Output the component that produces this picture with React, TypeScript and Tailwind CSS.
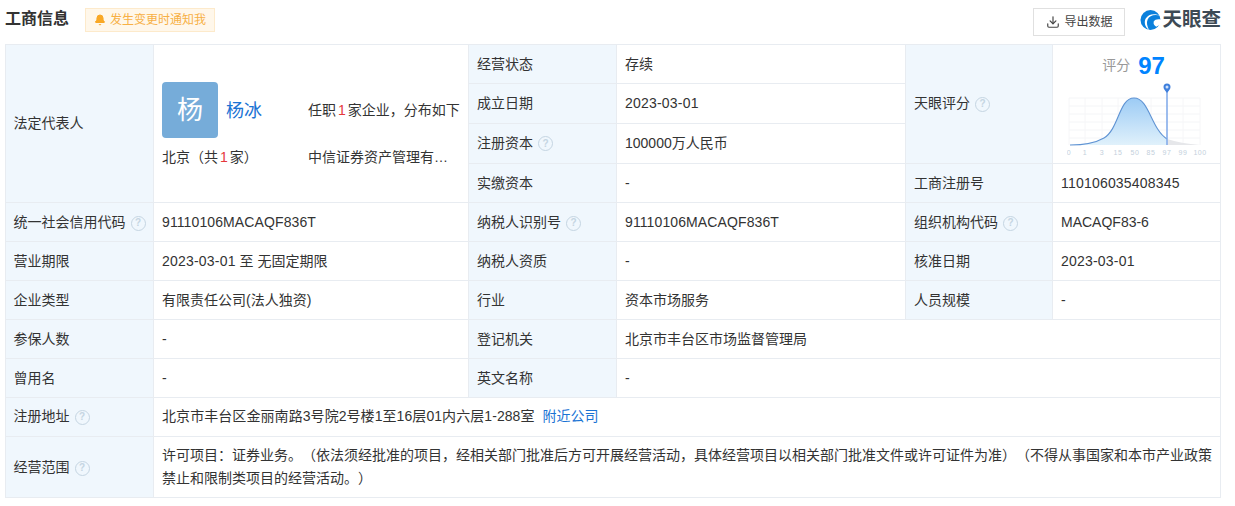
import { Bell, Download } from 'lucide-react';

const labelCls = 'border border-[#e8ecf1] bg-[#f0f7fd] pl-2 pr-1 align-middle';
const firstLabelCls = 'border border-[#e8ecf1] bg-[#f0f7fd] pl-[7.5px] pr-1 align-middle';
const valueCls = 'border border-[#e8ecf1] bg-white pl-2 pr-1 align-middle';
const digits = 'tracking-[0.2px]';
const codes = 'tracking-[0.11px]';

function Help() {
  return (
    <span className="ml-[5px] inline-flex h-[15px] w-[15px] items-center justify-center rounded-full border-[1.5px] border-[#c5d5e2] align-[1px] text-[10px] font-bold leading-none text-[#c5d5e2]">
      ?
    </span>
  );
}

function Logo() {
  return (
    <div className="flex items-center">
      <svg width="21" height="22" viewBox="0 0 22 22">
        <circle cx="11" cy="11" r="10.5" fill="#0a80dc" />
        <path d="M22 7C16 4.500 10 6 8 10.500c-1.500 3.500-.5 7 1.500 11C5 18.500 4 13 6 9.500 9 5 15 3.500 22 7z" fill="#fff" />
        <path d="M22 10.500c-3.500-1-6.500 0-7.500 2-1 2.500.5 4 2.500 5.500l5-2.500z" fill="#fff" />
      </svg>
      <span className="ml-[1px] text-[19.5px] font-bold leading-none text-[#3d4a55]">天眼查</span>
    </div>
  );
}

function ScoreChart() {
  return (
    <svg width="152" height="80" viewBox="0 0 152 80" className="ml-[14px] block">
      <defs>
        <linearGradient id="bell" x1="0" y1="0" x2="0" y2="1">
          <stop offset="0" stopColor="#9ccbf5" />
          <stop offset="1" stopColor="#e0f1fb" />
        </linearGradient>
      </defs>
      {[19, 27, 35, 43, 51, 59].map((y) => (
        <line key={y} x1="2" x2="133" y1={y} y2={y} stroke="#f4f5f7" />
      ))}
      {[2, 18, 35, 51, 68, 84, 100, 116, 133].map((x) => (
        <line key={x} x1={x} x2={x} y1="19" y2="66" stroke="#f6f6f8" />
      ))}
      <path d="M100 60C109 63 120 65 133 66H100z" fill="#e6e7ea" />
      <path d="M3 66C20 66 30 63 37 59 52 50 52 19 67 19 82 19 84 50 100 60V66z" fill="url(#bell)" />
      <path d="M3 66C20 66 30 63 37 59 52 50 52 19 67 19 82 19 84 50 100 60" fill="none" stroke="#5f93d3" strokeWidth="1.100" />
      <line x1="100" x2="100" y1="10" y2="66" stroke="#7ea9ea" strokeWidth="1.500" />
      <path d="M100 14c-2-2.500-3.500-4-3.500-6a3.500 3.500 0 0 1 7 0c0 2-1.500 3.500-3.500 6z" fill="#3f7fdc" />
      <circle cx="100" cy="8" r="1.500" fill="#cfe2fb" />
      {[
        ['0', 2],
        ['1', 18],
        ['3', 35],
        ['15', 51],
        ['50', 68],
        ['85', 84],
        ['97', 100],
        ['99', 116],
        ['100', 133],
      ].map(([t, x]) => (
        <text key={t} x={x} y="76" textAnchor="middle" fontSize="7" letterSpacing="0.500" fill="#c3d0dc" fontFamily="Liberation Sans">
          {t}
        </text>
      ))}
    </svg>
  );
}

export default function App() {
  return (
    <div className="h-[506px] w-[1235px] overflow-hidden bg-white pl-[5px] font-['Liberation_Sans','Noto_Sans_CJK_SC',sans-serif] text-[14px] text-[#333] [text-spacing-trim:space-all]">
      <div className="flex h-[44px] w-[1216px] items-start">
        <h2 className="mt-[6px] text-[16px] font-bold leading-[26px] text-[#333]">工商信息</h2>
        <div className="ml-[16px] mt-[8px] flex h-[24px] w-[130px] items-center border border-[#fdeacb] bg-[#fff7ea] pl-[8px] text-[12px] text-[#f7b045]">
          <Bell size={12} fill="#f9a825" stroke="#f9a825" className="mr-[4px] shrink-0" />
          发生变更时通知我
        </div>
        <button className="ml-auto mt-[8px] flex h-[28px] w-[92px] items-center justify-center border border-[#e0e0e0] bg-white text-[12px] text-[#444]">
          <Download size={14} className="mr-[4px]" />
          导出数据
        </button>
        <div className="ml-[15px] mt-[9px]">
          <Logo />
        </div>
      </div>

      <table className="w-[1215px] table-fixed border-collapse leading-[20px]">
        <colgroup>
          <col className="w-[148px]" />
          <col className="w-[315px]" />
          <col className="w-[148px]" />
          <col className="w-[289px]" />
          <col className="w-[147px]" />
          <col className="w-[168px]" />
        </colgroup>
        <tbody>
          <tr className="h-[39px]">
            <td rowSpan={4} className={`${firstLabelCls} pb-[2px]`}>法定代表人</td>
            <td rowSpan={4} className={valueCls}>
              <div className="mt-[2px] grid grid-cols-[146px_1fr] items-center">
                <div className="flex items-center">
                  <div className="flex h-[56px] w-[56px] items-center justify-center rounded-[4px] bg-[#76acd9] text-[26px] text-white">杨</div>
                  <a className="ml-[8px] pt-[2px] text-[18px] text-[#1a73d4]">杨冰</a>
                </div>
                <div className="whitespace-nowrap">任职<span className="mx-[2px] text-[#e5383b]">1</span>家企业，分布如下</div>
                <div className="mt-[9px]">北京（共<span className="mx-[2px] text-[#e5383b]">1</span>家）</div>
                <div className="mt-[9px] whitespace-nowrap">中信证券资产管理有…</div>
              </div>
            </td>
            <td className={labelCls}>经营状态</td>
            <td className={valueCls}>存续</td>
            <td rowSpan={3} className={`${labelCls} pb-[2px]`}>天眼评分<Help /></td>
            <td rowSpan={3} className="border border-[#e8ecf1] bg-white align-top">
              <div className="mt-[8px] flex h-[26px] items-center justify-center pr-[6px]">
                <span className="-mt-[3px] text-[14px] text-[#999]">评分</span>
                <span className="ml-[8px] text-[24px] font-bold leading-[26px] text-[#0084ff]">97</span>
              </div>
              <ScoreChart />
            </td>
          </tr>
          <tr className="h-[40px]">
            <td className={`${labelCls} pb-[2px]`}>成立日期</td>
            <td className={`${valueCls} pb-[2px] ${digits}`}>2023-03-01</td>
          </tr>
          <tr className="h-[40px]">
            <td className={`${labelCls} pb-[2px]`}>注册资本<Help /></td>
            <td className={`${valueCls} pb-[2px]`}>100000万人民币</td>
          </tr>
          <tr className="h-[39px]">
            <td className={labelCls}>实缴资本</td>
            <td className={valueCls}>-</td>
            <td className={labelCls}>工商注册号</td>
            <td className={`${valueCls} ${digits}`}>110106035408345</td>
          </tr>
          <tr className="h-[39px]">
            <td className={firstLabelCls}>统一社会信用代码<Help /></td>
            <td className={`${valueCls} ${codes}`}>91110106MACAQF836T</td>
            <td className={labelCls}>纳税人识别号<Help /></td>
            <td className={`${valueCls} ${codes}`}>91110106MACAQF836T</td>
            <td className={labelCls}>组织机构代码<Help /></td>
            <td className={valueCls}>MACAQF83-6</td>
          </tr>
          <tr className="h-[39px]">
            <td className={firstLabelCls}>营业期限</td>
            <td className={valueCls}><span className={digits}>2023-03-01</span> 至 无固定期限</td>
            <td className={labelCls}>纳税人资质</td>
            <td className={valueCls}>-</td>
            <td className={labelCls}>核准日期</td>
            <td className={`${valueCls} ${digits}`}>2023-03-01</td>
          </tr>
          <tr className="h-[39px]">
            <td className={firstLabelCls}>企业类型</td>
            <td className={valueCls}>有限责任公司(法人独资)</td>
            <td className={labelCls}>行业</td>
            <td className={valueCls}>资本市场服务</td>
            <td className={labelCls}>人员规模</td>
            <td className={valueCls}>-</td>
          </tr>
          <tr className="h-[39px]">
            <td className={firstLabelCls}>参保人数</td>
            <td className={valueCls}>-</td>
            <td className={labelCls}>登记机关</td>
            <td colSpan={3} className={valueCls}>北京市丰台区市场监督管理局</td>
          </tr>
          <tr className="h-[39px]">
            <td className={firstLabelCls}>曾用名</td>
            <td className={valueCls}>-</td>
            <td className={labelCls}>英文名称</td>
            <td colSpan={3} className={valueCls}>-</td>
          </tr>
          <tr className="h-[39px]">
            <td className={`${firstLabelCls} pb-[2px]`}>注册地址<Help /></td>
            <td colSpan={5} className={`${valueCls} pb-[2px]`}>
              <span className="tracking-[0.07px]">北京市丰台区金丽南路3号院2号楼1至16层01内六层1-288室</span>
              <a className="ml-[8px] text-[#1a73d4]">附近公司</a>
            </td>
          </tr>
          <tr className="h-[61px]">
            <td className={firstLabelCls}>经营范围<Help /></td>
            <td colSpan={5} className={`${valueCls} pb-[1px] leading-[22.5px]`}>
              许可项目：证券业务。（依法须经批准的项目，经相关部门批准后方可开展经营活动，具体经营项目以相关部门批准文件或许可证件为准）（不得从事国家和本市产业政策禁止和限制类项目的经营活动。）
            </td>
          </tr>
        </tbody>
      </table>
    </div>
  );
}
